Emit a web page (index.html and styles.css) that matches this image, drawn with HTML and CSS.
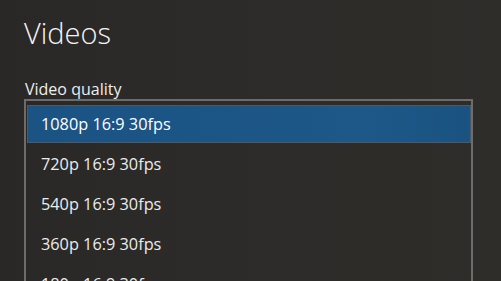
FILE: index.html
```html
<!DOCTYPE html>
<html lang="en">
<head>
<meta charset="utf-8">
<title>Videos</title>
<link rel="stylesheet" href="styles.css">
</head>
<body>
<main class="page">
  <h1 class="title">Videos</h1>
  <div class="label">Video quality</div>
  <ul class="list">
    <li class="item selected">1080p 16:9 30fps</li>
    <li class="item">720p 16:9 30fps</li>
    <li class="item">540p 16:9 30fps</li>
    <li class="item">360p 16:9 30fps</li>
    <li class="item">180p 16:9 30fps</li>
  </ul>
</main>
</body>
</html>
```
FILE: styles.css
```css
html, body {
  margin: 0;
  padding: 0;
  height: 100%;
  overflow: hidden;
}
body {
  background: linear-gradient(90deg, #292826 0%, #2c2b29 40%, #2e2d2a 100%);
  font-family: "Open Sans", "Noto Sans", sans-serif;
  color: #f2f2f2;
}
.page {
  padding: 14px 0 0 24px;
}
.title {
  margin: 0;
  font-size: 29px;
  font-weight: 300;
  line-height: 38px;
  color: #f4f4f4;
}
.label {
  margin-top: 27px;
  padding-left: 1px;
  font-size: 16px;
  line-height: 20px;
  height: 20px;
  color: #eeeeee;
}
.list {
  list-style: none;
  margin: 0;
  width: 442px;
  border: 2px solid #6c6c6a;
  border-bottom: none;
  padding: 5px 1px 0 2px;
  height: 300px;
  box-sizing: content-box;
}
.item {
  height: 36px;
  margin-bottom: 4px;
  padding-left: 13px;
  font-size: 16.3px;
  line-height: 36px;
  color: #ececec;
}
.selected {
  background: linear-gradient(90deg, #1b5484 0%, #1c5686 60%, #1d5888 75%, #1a5382 100%);
  box-shadow: 0 0 0 1px #4f5963;
  color: #ffffff;
}
```
